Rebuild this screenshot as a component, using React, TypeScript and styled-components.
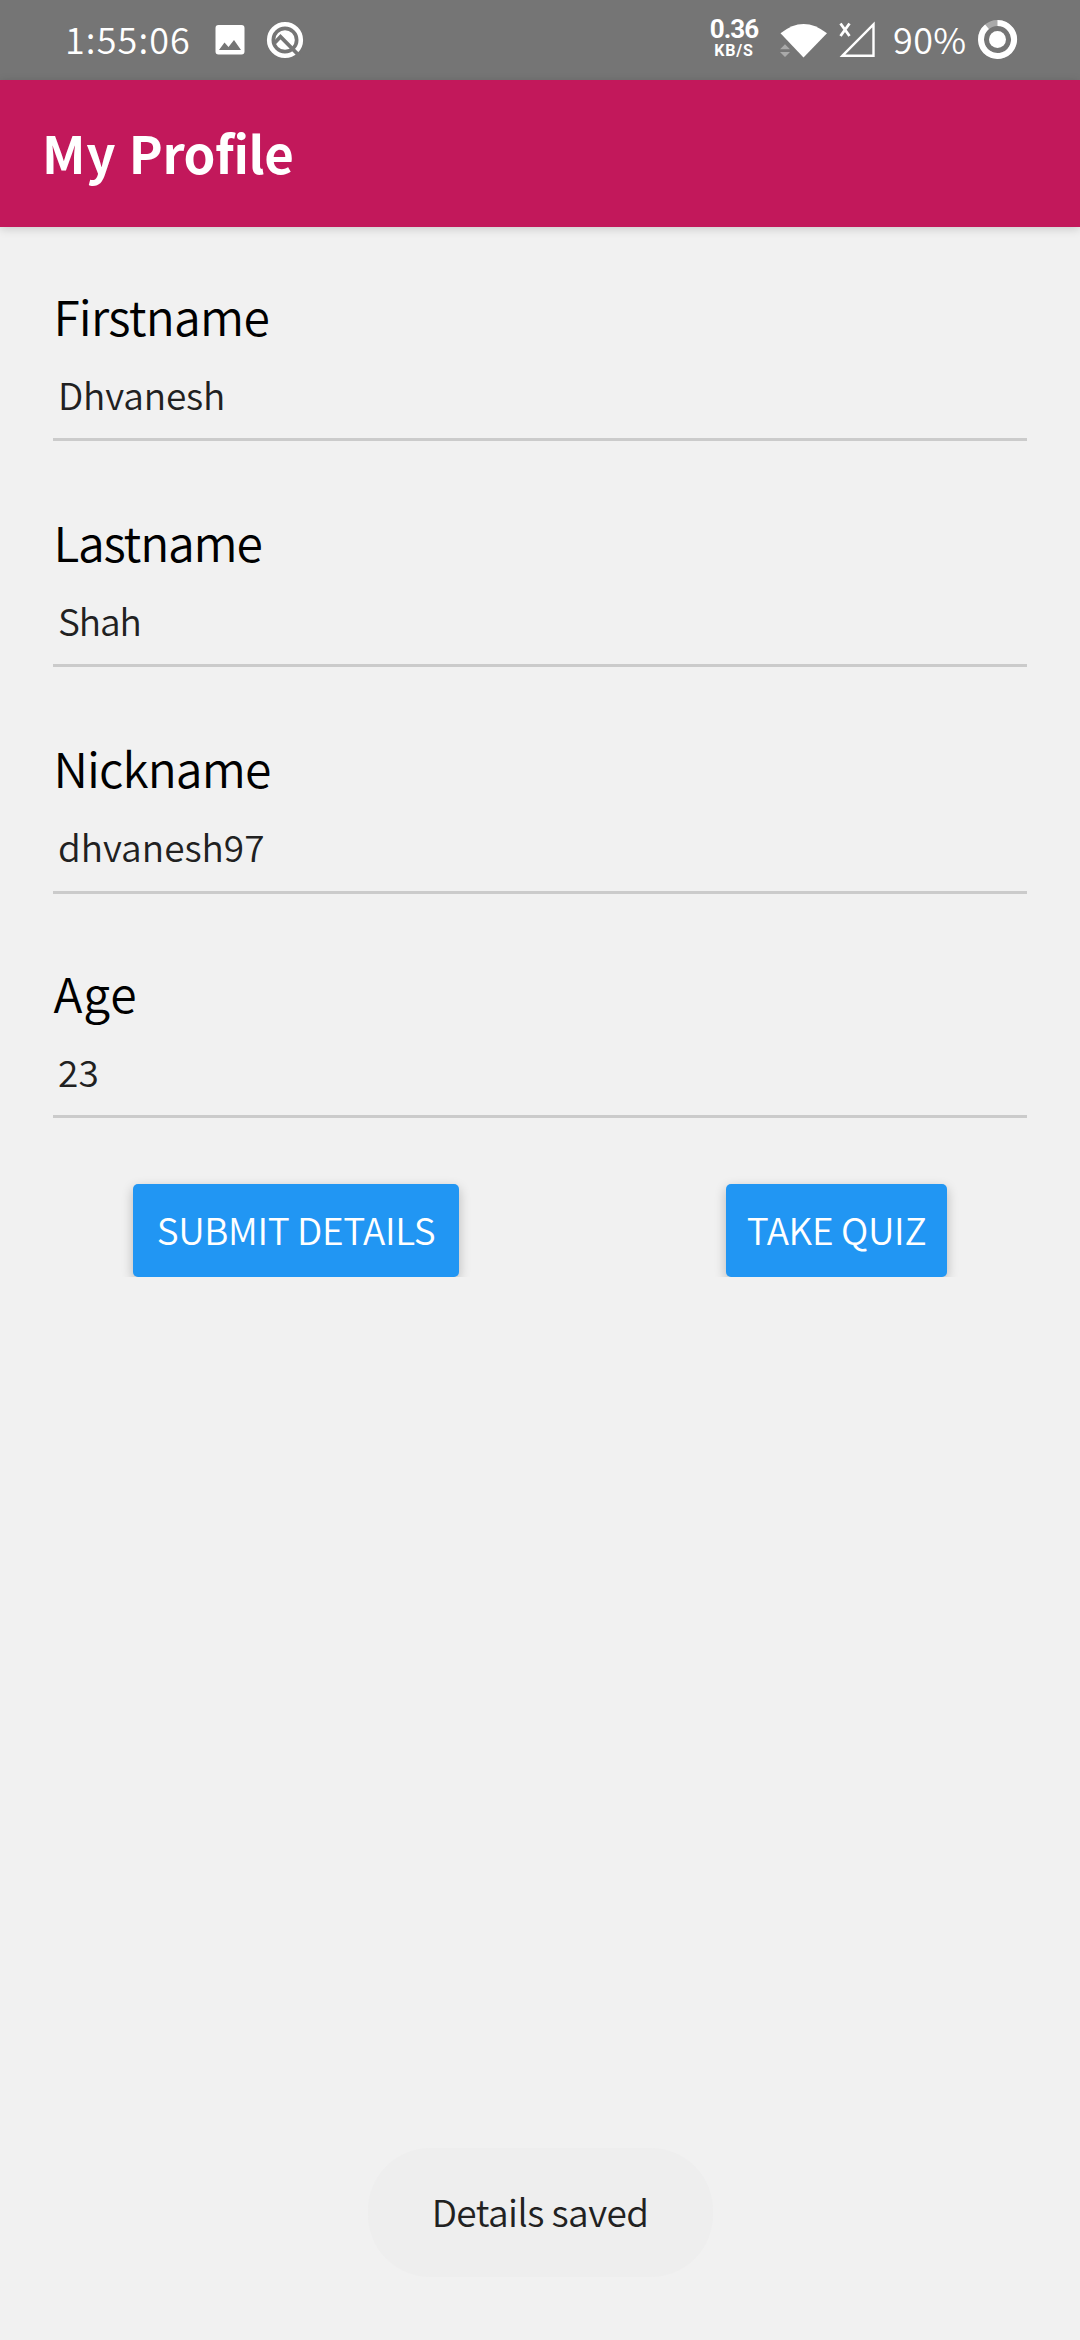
import React from "react";
import styled, { createGlobalStyle } from "styled-components";

const sans = `"Noto Sans CJK SC", "Noto Sans", sans-serif`;

const GlobalStyle = createGlobalStyle`
  * { box-sizing: border-box; }
  body { margin: 0; background: #f1f1f1; }
`;

const Screen = styled.div`
  display: flex;
  flex-direction: column;
  width: 1080px;
  height: 2340px;
  overflow: hidden;
  background: #f1f1f1;
  font-family: ${sans};
  font-kerning: normal;
`;

const StatusBar = styled.header`
  display: flex;
  flex: none;
  justify-content: space-between;
  height: 80px;
  padding: 0 62px 0 65px;
  background: #757575;
  color: #fff;
`;

const StatusGroup = styled.div`
  display: flex;
  align-items: flex-start;
`;

const StatusText = styled.span<{ $width: number; $spacing: number; $left?: number }>`
  width: ${(p) => p.$width}px;
  margin-left: ${(p) => p.$left ?? 0}px;
  font-size: 36px;
  font-weight: 350;
  line-height: 76px;
  letter-spacing: ${(p) => p.$spacing}px;
  white-space: nowrap;
`;

const StatusIcon = styled.svg<{ $left: number }>`
  flex: none;
  display: block;
  height: 80px;
  margin-left: ${(p) => p.$left}px;
`;

const Speed = styled.div`
  display: flex;
  flex-direction: column;
  align-items: center;
  width: 52px;
  padding-top: 16px;
  font-family: Roboto, sans-serif;
  font-weight: 700;
`;

const SpeedValue = styled.span`
  font-size: 26px;
  line-height: 27px;
  letter-spacing: -0.9px;
`;

const SpeedUnit = styled.span`
  font-size: 16px;
  line-height: 15px;
  letter-spacing: 0.8px;
`;

const AppBar = styled.div`
  flex: none;
  display: flex;
  align-items: center;
  height: 147px;
  padding: 0 42px 3px;
  background: #c2185b;
  box-shadow: 0 2px 9px rgba(0, 0, 0, 0.16);
`;

const Title = styled.h1`
  margin: 0;
  color: #fff;
  font-size: 51px;
  font-weight: 700;
  line-height: 76px;
  letter-spacing: -0.4px;
  white-space: pre;
`;

const TitleLead = styled.span`
  letter-spacing: 0.8px;
`;

const Form = styled.main`
  display: flex;
  flex-direction: column;
  flex: 1;
  padding: 58px 53px 0;
`;

const Field = styled.div<{ $height: number }>`
  display: flex;
  flex-direction: column;
  height: ${(p) => p.$height}px;
`;

const Label = styled.label<{ $spacing: number }>`
  height: 60px;
  padding-left: 0.4px;
  color: #000;
  font-size: 48px;
  font-weight: 350;
  line-height: 60px;
  letter-spacing: ${(p) => p.$spacing}px;
`;

const Value = styled.div<{ $bottom: number; $spacing: number }>`
  margin-top: 24px;
  padding: 0 5px ${(p) => p.$bottom}px;
  border-bottom: 3px solid #cbcbcb;
  color: #212121;
  font-size: 37px;
  font-weight: 350;
  line-height: 50px;
  letter-spacing: ${(p) => p.$spacing}px;
`;

const Actions = styled.div`
  display: flex;
  justify-content: space-between;
  height: 117px;
  margin: -8px 0 0;
  padding: 24px 80px 0;
  overflow: hidden;
`;

const Button = styled.button<{ $width: number; $spacing: number }>`
  width: ${(p) => p.$width}px;
  height: 93px;
  padding: 0 0 3px;
  border: 0;
  border-radius: 5px;
  background: #2196f3;
  box-shadow: 0 4px 12px rgba(0, 0, 0, 0.24);
  color: #fff;
  font-family: inherit;
  font-size: 37px;
  font-weight: 350;
  letter-spacing: ${(p) => p.$spacing}px;
  white-space: nowrap;
`;

const ToastRow = styled.div`
  display: flex;
  flex: none;
  justify-content: center;
  height: 192px;
`;

const Toast = styled.div`
  width: 345px;
  height: 129px;
  border-radius: 62px;
  background: #eeeeee;
  color: #212121;
  font-size: 37px;
  font-weight: 350;
  line-height: 127px;
  letter-spacing: -0.55px;
  text-align: center;
`;

const fields = [
  { label: "Firstname", value: "Dhvanesh", height: 226, bottom: 19, ls: -0.75, vs: -0.15 },
  { label: "Lastname", value: "Shah", height: 226, bottom: 19, ls: -1.18, vs: -1.1 },
  { label: "Nickname", value: "dhvanesh97", height: 225, bottom: 20, ls: -0.85, vs: 0 },
  { label: "Age", value: "23", height: 206, bottom: 19, ls: 1, vs: 0.3 },
];

const PictureIcon = () => (
  <StatusIcon width="30" viewBox="215 0 30 80" $left={24}>
    <path
      fill="#fff"
      fillRule="evenodd"
      d="M218.500 25h23a3 3 0 0 1 3 3v23.500a3 3 0 0 1-3 3h-23a3 3 0 0 1-3-3V28a3 3 0 0 1 3-3zM219 50h22l-7-10-5.500 7-4-4.500z"
    />
  </StatusIcon>
);

const AndroidQIcon = () => (
  <StatusIcon width="38" viewBox="266 0 38 80" $left={21}>
    <circle cx="285" cy="40" r="15.800" fill="none" stroke="#fff" strokeWidth="4.600" />
    <circle cx="285" cy="40" r="9.800" fill="#fff" />
    <path fill="none" stroke="#757575" strokeWidth="3.800" d="M274.500 43l6-6.300 18.500 18.800" />
  </StatusIcon>
);

const WifiIcon = () => (
  <StatusIcon width="48" viewBox="780 0 48 80" $left={20}>
    <path fill="#fff" d="M780.500 33.300Q803.500 14.500 827 33.300L803.500 57.500z" />
    <path fill="#a9a9a9" d="M780 49.300l5-5 5 5zM780 52h10l-5 5z" />
  </StatusIcon>
);

const SignalIcon = () => (
  <StatusIcon width="38" viewBox="838 0 38 80" $left={10}>
    <path fill="none" stroke="#fff" strokeWidth="2.400" d="M842.500 55.700L873.500 24.500v31.200z" />
    <path fill="none" stroke="#fff" strokeWidth="2.800" d="M840.500 23.500l9 12.500M849.500 23.500l-9 12.500" />
  </StatusIcon>
);

const BatteryIcon = () => (
  <StatusIcon width="40" viewBox="978 0 40 80" $left={10}>
    <circle cx="997.500" cy="39.500" r="16.500" fill="none" stroke="#aaa" strokeWidth="6" />
    <path
      fill="none"
      stroke="#fff"
      strokeWidth="6"
      d="M997.500 23A16.500 16.500 0 1 1 987 26.800"
    />
    <circle cx="997.500" cy="39.500" r="8.500" fill="#fff" />
  </StatusIcon>
);

export default function App() {
  return (
    <>
      <GlobalStyle />
      <Screen>
        <StatusBar>
          <StatusGroup>
            <StatusText $width={126} $spacing={1.1}>1:55:06</StatusText>
            <PictureIcon />
            <AndroidQIcon />
          </StatusGroup>
          <StatusGroup>
            <Speed>
              <SpeedValue>0.36</SpeedValue>
              <SpeedUnit>KB/S</SpeedUnit>
            </Speed>
            <WifiIcon />
            <SignalIcon />
            <StatusText $width={75} $left={17} $spacing={0.4}>90%</StatusText>
            <BatteryIcon />
          </StatusGroup>
        </StatusBar>
        <AppBar>
          <Title>
            <TitleLead>My </TitleLead>
            Profile
          </Title>
        </AppBar>
        <Form>
          {fields.map((f) => (
            <Field key={f.label} $height={f.height}>
              <Label $spacing={f.ls}>{f.label}</Label>
              <Value $bottom={f.bottom} $spacing={f.vs}>
                {f.value}
              </Value>
            </Field>
          ))}
          <Actions>
            <Button $width={326} $spacing={-0.4}>SUBMIT DETAILS</Button>
            <Button $width={221} $spacing={-0.35}>TAKE QUIZ</Button>
          </Actions>
        </Form>
        <ToastRow>
          <Toast>Details saved</Toast>
        </ToastRow>
      </Screen>
    </>
  );
}
